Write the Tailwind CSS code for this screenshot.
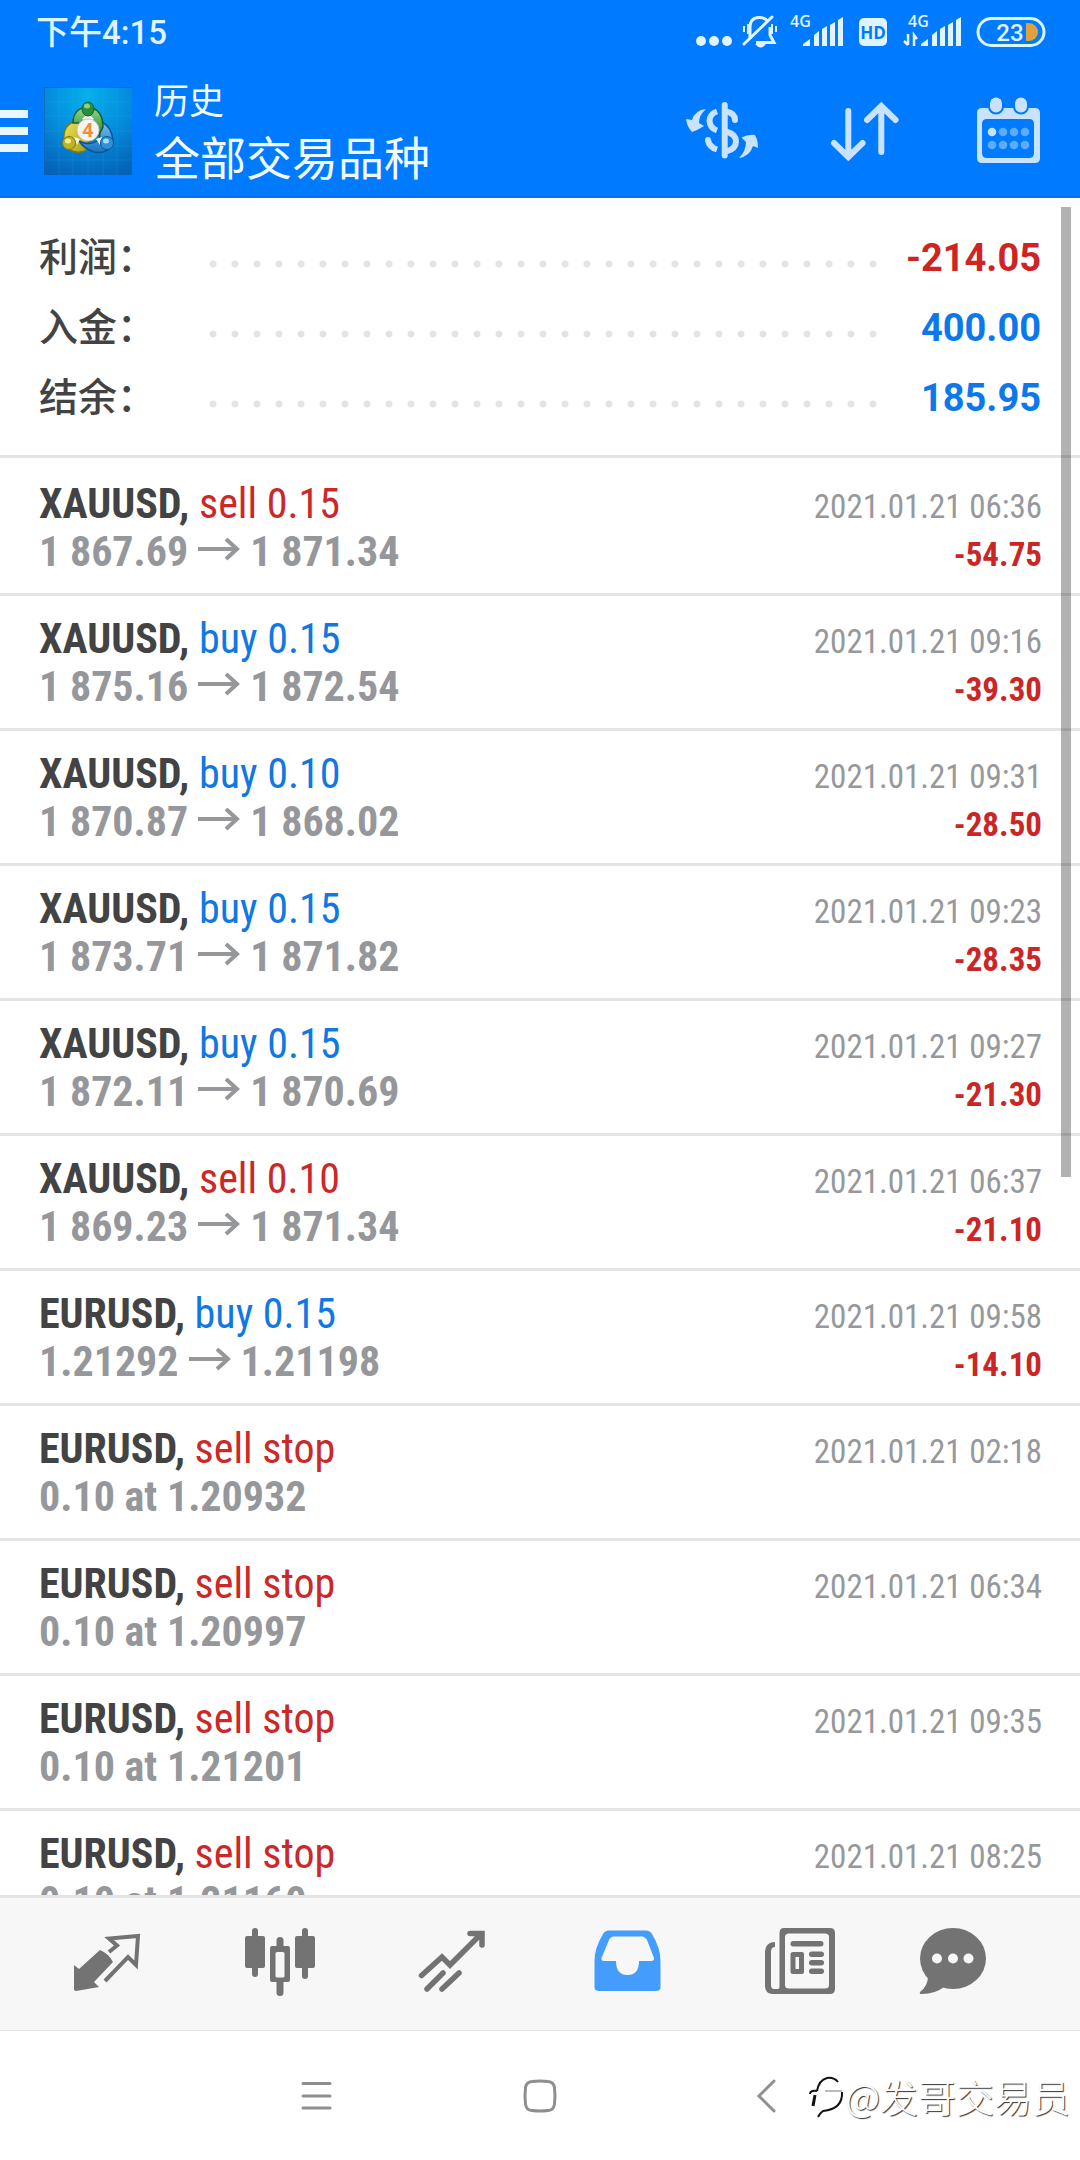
<!DOCTYPE html>
<html lang="zh-CN">
<head>
<meta charset="utf-8">
<meta name="viewport" content="width=device-width, initial-scale=1">
<title>历史</title>
<script src="https://cdn.jsdelivr.net/npm/@tailwindcss/browser@4"></script>
</head>
<body class="relative flex h-screen flex-col overflow-hidden bg-white font-['Roboto_Condensed','Liberation_Sans_Narrow',Roboto,'Noto_Sans_CJK_SC',sans-serif] text-[#434343]">

<header class="shrink-0 border-b-2 border-[#0f6fdc] bg-[#007aff] text-[#f0faff]">
  <!-- Status bar -->
  <div class="flex h-[66px] items-center justify-between pr-8 pl-9">
    <span class="font-[Roboto,'Noto_Sans_CJK_SC',sans-serif] text-[33px] leading-[66px] font-medium text-[#dff2ff]">下午4:15</span>
    <svg class="h-[52px] w-[358px]" viewBox="0 -6 358 52" fill="#e0f4ff" aria-label="状态">
      <circle cx="11" cy="28" r="5"/><circle cx="24" cy="28" r="5"/><circle cx="37" cy="28" r="5"/>
      <g fill="none" stroke="#e0f4ff" stroke-width="3">
        <path d="M60 26V15Q60 4 70 4.500Q76 5 78 9M80 14V22L84 29.500H66"/>
        <path d="M54 31L82 4" stroke-linecap="round"/>
        <path d="M54 13V19M58 11V21M82 11V21M86 13V19" stroke-width="2"/>
      </g>
      <path d="M65 31h11q-5 7-11 0z"/>
      <g font-family="Open Sans, sans-serif" font-weight="600" font-size="16"><text x="100" y="14">4G</text><text x="218" y="14">4G</text></g>
      <path d="M113 33V31L120 26V33zM124 22l5-4v15h-5zM132 16l5-3v20h-5zM140 12l5-3v24h-5zM148 7l5-3v29h-5z"/>
      <path d="M231 33V31L238 26V33zM242 22l5-4v15h-5zM250 16l5-3v20h-5zM258 12l5-3v24h-5zM266 7l5-3v29h-5z"/>
      <path d="M218 21V32M218 32L214 28M224 33V22L227 26" fill="none" stroke="#e0f4ff" stroke-width="2.500"/>
      <rect x="169" y="5" width="28" height="28" rx="5"/>
      <text x="183" y="26" text-anchor="middle" font-family="Open Sans, sans-serif" font-weight="700" font-size="17" fill="#007aff">HD</text>
      <rect x="288" y="5.500" width="66" height="27" rx="13.500" fill="none" stroke="#d8f6ff" stroke-width="3"/>
      <text x="320" y="28" text-anchor="middle" font-family="Roboto, sans-serif" font-weight="500" font-size="24">23</text>
      <path d="M336 10h3a9 9 0 0 1 0 18h-3z" fill="#dda23c"/>
    </svg>
  </div>
  <!-- App bar -->
  <div class="flex h-[130px] items-center pr-8">
    <button type="button" aria-label="菜单" class="flex w-7 flex-col gap-[9px]">
      <span class="h-2 bg-[#e8f7ff]"></span><span class="h-2 bg-[#e8f7ff]"></span><span class="h-2 bg-[#e8f7ff]"></span>
    </button>
    <svg class="ml-4 h-[88px] w-[88px]" viewBox="0 0 88 88" aria-hidden="true">
      <defs>
        <radialGradient id="lg" cx=".5" cy=".1" r=".95"><stop offset="0" stop-color="#06b0ec"/><stop offset=".5" stop-color="#048cdc"/><stop offset="1" stop-color="#0463b8"/></radialGradient>
        <linearGradient id="gg" x2="0" y2="1"><stop offset="0" stop-color="#9bd98d"/><stop offset="1" stop-color="#1d8433"/></linearGradient>
        <linearGradient id="gy" x2="1" y2="1"><stop offset="0" stop-color="#efe35a"/><stop offset="1" stop-color="#a8a012"/></linearGradient>
        <linearGradient id="gb" x2="0" y2="1"><stop offset="0" stop-color="#7cc4f0"/><stop offset="1" stop-color="#1672c4"/></linearGradient>
      </defs>
      <rect width="88" height="88" fill="url(#lg)"/>
      <path d="M15 0V88M29 0V88M44 0V88M59 0V88M73 0V88M0 15H88M0 29H88M0 44H88M0 59H88M0 73H88" stroke="#4cc0f0" stroke-opacity=".15"/>
      <path d="M0 .5H88M.5 0V88" stroke="#0a5ca8" stroke-opacity=".6"/>
      <g stroke-width="1.500">
        <path d="M20 55Q18 36 34 34L44 44L44 62Q36 68 26 63z" fill="url(#gy)" stroke="#7d7a12"/>
        <path d="M55 34Q68 38 69 55Q64 68 50 65Q40 62 35 54Q46 60 56 52z" fill="url(#gb)" stroke="#0e5496"/>
        <path d="M29 36Q29 21 44 20Q59 22 59 40L55 48L50 36Q44 28 36 36z" fill="url(#gg)" stroke="#14612a"/>
      </g>
      <path d="M38 32L41 29H47L50 32L44 36zM30 50L36 52L33 58zM58 50L52 52L56 58z" fill="#eef6ee"/>
      <ellipse cx="44" cy="22" rx="6" ry="7" fill="#2a8f3c" stroke="#14612a"/><ellipse cx="43" cy="19" rx="3" ry="2.500" fill="#8ad08a"/>
      <circle cx="25" cy="56" r="6.500" fill="#c0b422" stroke="#7d7a12"/><ellipse cx="24" cy="54" rx="3" ry="2.500" fill="#f3ec94"/>
      <circle cx="63" cy="56" r="6.500" fill="#3090d8" stroke="#0e5496"/><ellipse cx="62" cy="54" rx="3" ry="2.500" fill="#a9dcf8"/>
      <circle cx="44" cy="43" r="11" fill="#f6f4f2" stroke="#c9c4bd"/>
      <text x="44" y="50" text-anchor="middle" font-family="Open Sans, sans-serif" font-weight="700" font-size="19" fill="#f08c34">4</text>
    </svg>
    <div class="ml-[22px] flex-1 pb-1 font-['Noto_Sans_CJK_SC',sans-serif]">
      <p class="text-[35px] leading-[52px]">历史</p>
      <h1 class="text-[46px] leading-[60px]">全部交易品种</h1>
    </div>
    <div class="flex gap-[63px]">
      <button type="button" aria-label="交易品种" class="h-20 w-20">
        <svg class="h-20 w-20" viewBox="0 0 80 80" fill="none" stroke="#c8e2ff" stroke-width="6">
          <path d="M24 18Q13 19 10 29L4 28Q5 36 10 41Q16 39 22 35L17 32Q17 24 24 18z" fill="#c8e2ff" stroke="none"/>
          <path d="M35 20.500Q27.500 23 27.500 30Q28 37 35 39.500M26 49Q27 56 35 58.500"/>
          <path d="M42.700 14V64.500" stroke-linecap="round"/>
          <path d="M44 20.500Q53 22 53 29" stroke-linecap="round"/><path d="M44 40.500Q54 43 54 50.500Q54 58 44 60.500"/>
          <circle cx="26" cy="49" r="3" fill="#c8e2ff" stroke="none"/>
          <path d="M57 67Q68 65 71 55L76 57Q76 49 73 44Q66 43 59.500 46.500L64 51Q64 60 57 67z" fill="#c8e2ff" stroke="none"/>
        </svg>
      </button>
      <button type="button" aria-label="排序" class="h-20 w-20">
        <svg class="h-20 w-20" viewBox="0 0 80 80" fill="none" stroke="#c8e2ff" stroke-width="6" stroke-linecap="round">
          <path d="M23.300 20V66M9 52L23.300 66L37.600 52M56.300 61V15M42 29L56.300 15L70.600 29"/>
        </svg>
      </button>
      <button type="button" aria-label="日期" class="h-20 w-20">
        <svg class="h-20 w-20" viewBox="0 0 80 80" fill="#c8e2ff">
          <path fill-rule="evenodd" d="M14 17H67Q72 17 72 22V67Q72 72 67 72H14Q9 72 9 67V22Q9 17 14 17zM19 28Q14 28 14 33V62Q14 67 19 67H61Q66 67 66 62V33Q66 28 61 28z"/>
          <rect x="22" y="6.500" width="12" height="15" rx="6" stroke="#007aff" stroke-width="4" paint-order="stroke"/>
          <rect x="47" y="6.500" width="12" height="15" rx="6" stroke="#007aff" stroke-width="4" paint-order="stroke"/>
          <circle cx="24" cy="41" r="4.300"/>
          <g fill="#5cacff"><circle cx="35" cy="41" r="4.300"/><circle cx="46" cy="41" r="4.300"/><circle cx="57" cy="41" r="4.300"/><circle cx="24" cy="54" r="4.300"/><circle cx="35" cy="54" r="4.300"/><circle cx="46" cy="54" r="4.300"/><circle cx="57" cy="54" r="4.300"/></g>
        </svg>
      </button>
    </div>
  </div>
</header>

<main class="relative min-h-0 flex-1 overflow-hidden">
  <dl class="border-b-3 border-[#e4e4e4] pt-[25px] pr-[39px] pb-[22px] pl-[39px] font-[Roboto,'Noto_Sans_CJK_SC',sans-serif]">
    <div class="flex h-[70px] items-center">
      <dt class="w-[163px] text-[39px] leading-[70px] font-medium">利润：</dt>
      <dd class="mt-3 h-2 flex-1 bg-[radial-gradient(circle,#e4e4e4_3px,transparent_4px)] bg-[length:22px_8px] bg-repeat-x"></dd>
      <dd class="w-[156px] text-right text-[38px] leading-[70px] font-bold text-[#d02424]">-214.05</dd>
    </div>
    <div class="flex h-[70px] items-center">
      <dt class="w-[163px] text-[39px] leading-[70px] font-medium">入金：</dt>
      <dd class="mt-3 h-2 flex-1 bg-[radial-gradient(circle,#e4e4e4_3px,transparent_4px)] bg-[length:22px_8px] bg-repeat-x"></dd>
      <dd class="w-[156px] text-right text-[38px] leading-[70px] font-bold text-[#0c78ec]">400.00</dd>
    </div>
    <div class="flex h-[70px] items-center">
      <dt class="w-[163px] text-[39px] leading-[70px] font-medium">结余：</dt>
      <dd class="mt-3 h-2 flex-1 bg-[radial-gradient(circle,#e4e4e4_3px,transparent_4px)] bg-[length:22px_8px] bg-repeat-x"></dd>
      <dd class="w-[156px] text-right text-[38px] leading-[70px] font-bold text-[#0c78ec]">185.95</dd>
    </div>
  </dl>
  <ul id="deals" class="pt-[3px]"></ul>
  <div class="absolute top-[9px] right-[9px] h-[970px] w-[10px] bg-black/30"></div>
</main>

<nav class="grid shrink-0 grid-cols-6 border-t-3 border-b border-[#e4e4e4] bg-[#f7f7f7] px-5 text-[#737373]">
  <button type="button" aria-label="行情" class="flex h-[132px] items-center justify-center">
    <svg class="h-20 w-20" viewBox="0 0 80 80" fill="currentColor">
      <path d="M7 65V41L12 45L33 26Q41 29 46 38L27 58L32 63L9 67Q7 67 7 65z"/>
      <path d="M42 28L50 21.500L42 14.500L71 12L69 41L61 33L38 57" fill="none" stroke="currentColor" stroke-width="4"/>
    </svg>
  </button>
  <button type="button" aria-label="图表" class="flex h-[132px] items-center justify-center">
    <svg class="h-20 w-20" viewBox="0 0 80 80" fill="currentColor">
      <rect x="5" y="12" width="20" height="32" rx="2"/><rect x="12" y="4" width="6" height="49" rx="3"/>
      <rect x="55" y="12" width="20" height="32" rx="2"/><rect x="62" y="4" width="6" height="51" rx="3"/>
      <path fill-rule="evenodd" d="M32 22H48Q50 22 50 24V56Q50 58 48 58H32Q30 58 30 56V24Q30 22 32 22zM37 28Q35.500 28 35.500 29.500V52Q35.500 53.500 37 53.500H43Q44.500 53.500 44.500 52V29.500Q44.500 28 43 28z"/>
      <rect x="36.500" y="13" width="7" height="13" rx="3.500"/><rect x="36.500" y="55" width="7" height="17" rx="3.500"/>
    </svg>
  </button>
  <button type="button" aria-label="交易" class="flex h-[132px] items-center justify-center">
    <svg class="h-20 w-20" viewBox="0 0 80 80" fill="none" stroke="currentColor" stroke-width="5.500" stroke-linecap="round">
      <path d="M8.500 51.500L29 33L37 41L68 10M57 9.500H69V21M14 65L30 49M29 65L46 49"/>
    </svg>
  </button>
  <button type="button" aria-label="历史" aria-current="page" class="flex h-[132px] items-center justify-center text-[#449dfd]">
    <svg class="h-20 w-20" viewBox="0 0 80 80" fill="currentColor">
      <path fill-rule="evenodd" d="M22 6.500H59Q63 6.500 65 10Q74 25 73.500 38V63Q73.500 67 69 67H12Q7.500 67 7.500 63V38Q7 25 16 10Q18 6.500 22 6.500zM27 12.500Q23.500 12.500 22 16L14.500 34Q14 37 17 37H29Q29 51 40.500 51Q52 51 52 37H64Q67.500 37 67 34L60 16Q58 12.500 55 12.500z"/>
    </svg>
  </button>
  <button type="button" aria-label="新闻" class="flex h-[132px] items-center justify-center">
    <svg class="h-20 w-20" viewBox="0 0 80 80" fill="currentColor">
      <path fill-rule="evenodd" d="M24 4H70Q75 4 75 9V65Q75 70 70 70H12Q5 69 5 62V27Q6 18 15 18V23Q11 23 11 28V61Q11 65 14 65H18Q19.500 65 19.500 62V9Q19.500 4 24 4zM29 9.500Q25 9.500 25 13V61Q25 64.500 29 64.500H65Q69 64.500 69 61V13Q69 9.500 65 9.500z"/>
      <rect x="30.500" y="17" width="33" height="5.500" rx="2.700"/>
      <path fill-rule="evenodd" d="M33 28H42Q44 28 44 30V48Q44 50 42 50H33Q30.500 50 30.500 48V30Q30.500 28 33 28zM35.500 33V45H39V33z"/>
      <rect x="49" y="27.500" width="15" height="5.500" rx="2.700"/><rect x="49" y="36" width="15" height="5.500" rx="2.700"/><rect x="49" y="44.500" width="15" height="5.500" rx="2.700"/>
    </svg>
  </button>
  <button type="button" aria-label="消息" class="flex h-[132px] items-center justify-center pr-10">
    <svg class="h-20 w-20" viewBox="0 0 80 80" fill="currentColor">
      <ellipse cx="40" cy="34.500" rx="33" ry="30.500"/><path d="M15 52Q15 62 7 68Q6 70 9 70Q22 70 31 63z"/>
      <g fill="#f7f7f7"><circle cx="24" cy="34.500" r="5"/><circle cx="40" cy="34.500" r="5"/><circle cx="55.500" cy="34.500" r="5"/></g>
    </svg>
  </button>
</nav>

<!-- System navigation -->
<footer class="relative flex h-[129px] shrink-0 items-center justify-center gap-[188px] bg-white text-[#8f8f8f]">
  <button type="button" aria-label="最近任务" class="h-9 w-9"><svg class="h-9 w-9" viewBox="0 0 36 36" stroke="currentColor" stroke-width="3" stroke-linecap="round"><path d="M5 5.500H32M5 18H32M5 30H32"/></svg></button>
  <button type="button" aria-label="主屏幕" class="h-9 w-9"><svg class="h-9 w-9" viewBox="0 0 36 36" fill="none" stroke="currentColor" stroke-width="3"><path d="M10 3.500Q18 2.500 26 3.500Q32 4 32.500 10Q33.500 18 32.500 26Q32 32 26 32.500Q18 33.500 10 32.500Q4 32 3.500 26Q2.500 18 3.500 10Q4 4 10 3.500z"/></svg></button>
  <button type="button" aria-label="返回" class="h-9 w-9"><svg class="h-9 w-9" viewBox="0 0 36 36" fill="none" stroke="currentColor" stroke-width="3" stroke-linecap="round"><path d="M28 3L13 18L28 33"/></svg></button>
  <div class="absolute right-[10px] flex items-center">
    <svg class="h-11 w-9" viewBox="0 0 36 44" fill="none" stroke="#111" stroke-width="2">
      <path d="M8 17Q10 6 18 4Q25 3 29 8M1 20Q1 16 8 17M33 18Q34 35 14 37Q11 39 9 43"/><path d="M6 21L4 32" stroke-width="3"/><path d="M16 17H33" stroke-width="1" stroke="#777"/>
    </svg>
    <span class="font-['Noto_Sans_CJK_SC',sans-serif] text-[38px] leading-[50px] font-light text-white [text-shadow:1px_1px_1px_#000000d0]">@发哥交易员</span>
  </div>
</footer>

<script>
const deals = [
  ['XAUUSD', 'sell', '0.15', '1 867.69', '1 871.34', '06:36', '-54.75'],
  ['XAUUSD', 'buy', '0.15', '1 875.16', '1 872.54', '09:16', '-39.30'],
  ['XAUUSD', 'buy', '0.10', '1 870.87', '1 868.02', '09:31', '-28.50'],
  ['XAUUSD', 'buy', '0.15', '1 873.71', '1 871.82', '09:23', '-28.35'],
  ['XAUUSD', 'buy', '0.15', '1 872.11', '1 870.69', '09:27', '-21.30'],
  ['XAUUSD', 'sell', '0.10', '1 869.23', '1 871.34', '06:37', '-21.10'],
  ['EURUSD', 'buy', '0.15', '1.21292', '1.21198', '09:58', '-14.10'],
  ['EURUSD', 'sell', 'stop', '0.10 at 1.20932', '', '02:18', ''],
  ['EURUSD', 'sell', 'stop', '0.10 at 1.20997', '', '06:34', ''],
  ['EURUSD', 'sell', 'stop', '0.10 at 1.21201', '', '09:35', ''],
  ['EURUSD', 'sell', 'stop', '0.10 at 1.21160', '', '08:25', ''],
];
const arrow = '<svg class="mx-[10px] inline-block h-7 w-[42px] align-baseline" viewBox="0 0 42 28" fill="none" stroke="currentColor" stroke-width="4" aria-label="→"><path d="M0 11H39M28 1L39 11L28 21"/></svg>';
document.getElementById('deals').innerHTML = deals.map(([symbol, side, size, from, to, time, profit]) => `
  <li class="h-[135px] border-b-3 border-[#e4e4e4] pt-[19px] pr-[38px] pl-[39px]">
    <div class="flex h-12 items-baseline justify-between">
      <span class="text-[42px] leading-[48px]"><b>${symbol},</b> <span class="${side === 'sell' ? 'text-[#cb2828]' : 'text-[#1177e2]'}">${side} ${size}</span></span>
      <time class="text-[33px] leading-[48px] text-[#96989c]">2021.01.21 ${time}</time>
    </div>
    <div class="flex h-12 items-baseline justify-between font-bold">
      <span class="text-[42px] leading-[48px] text-[#96979b]">${from}${to ? arrow + to : ''}</span>
      <span class="text-[33px] leading-[48px] text-[#cb2626]">${profit}</span>
    </div>
  </li>`).join('');
</script>
</body>
</html>
